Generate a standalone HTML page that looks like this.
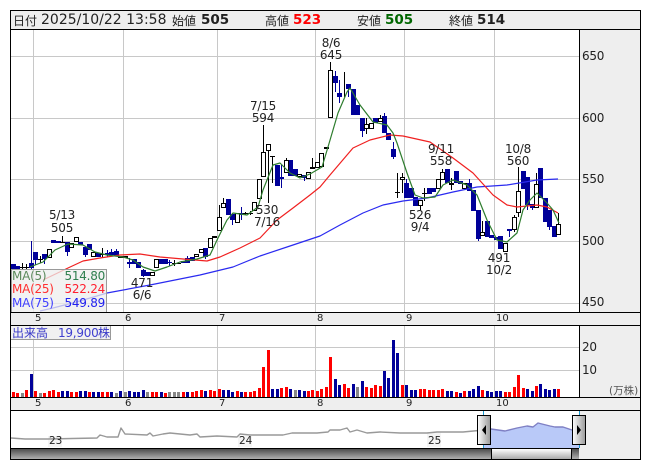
<!DOCTYPE html>
<html><head><meta charset="utf-8"><style>
html,body{margin:0;padding:0;background:#fff;width:653px;height:470px;overflow:hidden}
svg{display:block;font-family:"DejaVu Sans","Noto Sans CJK JP",sans-serif}
.c{shape-rendering:crispEdges}
text{fill:#222}
.l{font-size:12px;letter-spacing:-.25px;text-anchor:middle}
.a{font-size:12px;letter-spacing:-.25px}
.m{font-size:10px;fill:#333}
.h{font-size:14px}
.j{font-size:12px;font-family:"Liberation Sans","Noto Sans CJK JP",sans-serif}
.b{font-size:13.5px;font-weight:bold}
</style></head><body>
<svg width="653" height="470" viewBox="0 0 653 470" xmlns="http://www.w3.org/2000/svg">
<defs>
<linearGradient id="t" x1="0" y1="0" x2="0" y2="1"><stop offset="0" stop-color="#444"/><stop offset="1" stop-color="#b0b0b0"/></linearGradient>
<linearGradient id="th" x1="0" y1="0" x2="0" y2="1"><stop offset="0" stop-color="#fff"/><stop offset="1" stop-color="#aaa"/></linearGradient>
<linearGradient id="hl" x1="0" y1="0" x2="1" y2="0"><stop offset="0" stop-color="#fff"/><stop offset="1" stop-color="#999"/></linearGradient>
<linearGradient id="hr" x1="0" y1="0" x2="1" y2="0"><stop offset="0" stop-color="#fff"/><stop offset="1" stop-color="#999"/></linearGradient>
</defs>
<g class="c">
<rect x="10" y="10" width="631" height="450" fill="#eee"/>
<rect x="11" y="30" width="568" height="282" fill="#fff"/>
<rect x="11" y="326" width="568" height="71" fill="#fff"/>
<rect x="11" y="411" width="568" height="37" fill="#fff"/>
<path stroke="#c8c8c8" fill="none" d="M33.5 30V312M123.5 30V312M217.5 30V312M315.5 30V312M404.5 30V312M494.5 30V312M33.5 326V397M123.5 326V397M217.5 326V397M315.5 326V397M404.5 326V397M494.5 326V397M11 56.5H579M11 118.5H579M11 179.5H579M11 241.5H579M11 303.5H579M11 347.5H579M11 370.5H579"/>
</g>

<!-- wicks -->
<g class="c" fill="none">
<path stroke="#000099" d="M31.5 241V270M35.5 252V265M44.5 254V264M67.5 242V256M85.5 247V257M107.5 250V257M111.5 249V255M116.5 249V256M129.5 258V268M143.5 269V277M169.5 260V266M187.5 256V263M205.5 248V259M232.5 214V225M241.5 207V220M281.5 165V188M304.5 175V181M335.5 71V92M339.5 80V103M348.5 84V97M362.5 118V137M384.5 113V133M393.5 142V159M406.5 179V198M469.5 179V191M478.5 210V241M509.5 229V237M527.5 177V210M532.5 204V210M549.5 210V230"/>
<path stroke="#000" d="M22.5 263V270M26.5 264V270M40.5 256V263M62.5 236V243M102.5 248V258M174.5 260V266M245.5 212V215M250.5 211V215M219.5 205V217M223.5 198V203M263.5 125V152M268.5 144V203M272.5 156V183M286.5 158V160M312.5 158V167M330.5 62V70M344.5 72V97M366.5 118V134M380.5 115V118M397.5 173V198M402.5 173V193M420.5 206V210M424.5 188V201M442.5 169V172M451.5 178V190M482.5 221V232M514.5 215V232M518.5 167V217M536.5 173V184M558.5 213V224"/>
</g>
<!-- navy bodies -->
<path class="c" fill="#000099" d="M11 264h5v6h-5zM15 266h5v4h-5zM29 263h5v5h-5zM33 252h5v8h-5zM42 254h5v5h-5zM51 240h5v3h-5zM56 241h5v2h-5zM65 242h5v10h-5zM78 242h5v3h-5zM83 247h5v8h-5zM87 244h5v6h-5zM96 253h5v4h-5zM105 253h5v2h-5zM109 252h5v3h-5zM114 251h5v5h-5zM127 262h5v2h-5zM132 259h5v5h-5zM136 262h5v6h-5zM141 270h5v6h-5zM145 272h5v4h-5zM159 259h5v5h-5zM163 259h5v5h-5zM167 262h5v1h-5zM181 261h5v2h-5zM185 258h5v5h-5zM190 257h5v4h-5zM203 248h5v9h-5zM226 199h5v16h-5zM230 214h5v6h-5zM239 213h5v2h-5zM275 165h5v21h-5zM279 177h5v2h-5zM288 160h5v16h-5zM293 169h5v7h-5zM302 175h5v3h-5zM333 76h5v7h-5zM337 93h5v4h-5zM346 84h5v5h-5zM351 89h5v26h-5zM355 105h5v10h-5zM360 118h5v13h-5zM373 118h5v5h-5zM382 116h5v17h-5zM386 133h5v7h-5zM391 149h5v8h-5zM404 183h5v15h-5zM409 188h5v10h-5zM413 197h5v9h-5zM427 188h5v6h-5zM431 188h5v4h-5zM445 169h5v14h-5zM454 171h5v12h-5zM458 181h5v3h-5zM467 183h5v8h-5zM471 190h5v21h-5zM476 210h5v29h-5zM485 221h5v16h-5zM489 235h5v3h-5zM494 237h5v3h-5zM498 236h5v13h-5zM507 229h5v2h-5zM521 171h5v18h-5zM525 177h5v28h-5zM530 204h5v4h-5zM538 168h5v30h-5zM543 198h5v24h-5zM547 210h5v17h-5zM552 226h5v11h-5z"/>
<!-- doji -->
<path class="c" stroke="#000" fill="none" d="M20 267.5h5M24 267.5h5M38 259.5h5M60 242.5h5M100 254.5h5M172 263.5h5M176 263.5h5M243 213.5h5M248 213.5h5M270 156.5h5M395 192.5h5M422 193.5h5"/>
<!-- white bodies -->
<path class="c" fill="#fff" stroke="#000" d="M47.5 249.5h4v8h-4zM69.5 243.5h4v4h-4zM74.5 237.5h4v4h-4zM91.5 252.5h4v4h-4zM118.5 256.5h4v1h-4zM123.5 256.5h4v1h-4zM150.5 272.5h4v3h-4zM154.5 259.5h4v8h-4zM194.5 254.5h4v2h-4zM199.5 249.5h4v3h-4zM208.5 238.5h4v9h-4zM212.5 236.5h4v1h-4zM217.5 217.5h4v13h-4zM221.5 203.5h4v4h-4zM235.5 213.5h4v9h-4zM252.5 202.5h4v8h-4zM257.5 179.5h4v19h-4zM261.5 152.5h4v24h-4zM266.5 144.5h4v6h-4zM284.5 160.5h4v12h-4zM297.5 174.5h4v2h-4zM306.5 172.5h4v6h-4zM310.5 167.5h4v1h-4zM315.5 162.5h4v5h-4zM319.5 153.5h4v13h-4zM324.5 147.5h4v1h-4zM328.5 70.5h4v47h-4zM364.5 124.5h4v4h-4zM369.5 123.5h4v5h-4zM378.5 118.5h4v3h-4zM400.5 177.5h4v2h-4zM418.5 200.5h4v5h-4zM436.5 179.5h4v9h-4zM440.5 172.5h4v7h-4zM449.5 183.5h4v1h-4zM462.5 183.5h4v5h-4zM480.5 232.5h4v3h-4zM503.5 243.5h4v8h-4zM512.5 217.5h4v12h-4zM516.5 191.5h4v21h-4zM534.5 184.5h4v23h-4zM556.5 224.5h4v10h-4z"/>

<!-- MAs -->
<polyline fill="none" stroke="#2a2af0" stroke-width="1.2" stroke-linejoin="round" points="40,311 53,308 80,301 107,293 150,285 200,275 233,267 260,256 293,245 320,236 340,225 363,213 383,205 403,201 427,198 453,192 477,187 507,185 537,180 558,179"/>
<polyline fill="none" stroke="#f02020" stroke-width="1.2" stroke-linejoin="round" points="43,280 68,268 83,261 100,258 120,255 140,254 160,257 183,259 207,261 220,257 240,248 260,238 277,220 293,208 310,195 320,187 330,175 353,148 370,140 390,135 403,136 430,142 453,158 473,173 493,195 507,205 517,207 537,205 547,207 558,213"/>
<polyline fill="none" stroke="#2e7d2e" stroke-width="1.2" stroke-linejoin="round" points="30,267 43,262 55,250 68,244 83,245 95,252 107,255 123,257 133,260 143,267 155,271 167,267 180,262 197,259 210,255 218,238 227,220 233,213 247,215 258,207 263,190 273,165 280,163 290,173 300,178 310,174 322,167 328,147 338,113 347,92 350,88 360,105 373,122 387,125 393,133 397,143 407,173 415,195 423,198 435,197 443,185 453,180 467,185 477,195 487,220 497,240 507,242 517,233 523,210 530,200 537,193 547,203 553,210 559,223"/>

<!-- chart labels -->
<g class="l">
<text x="263" y="110">7/15</text><text x="263" y="122">594</text>
<text x="331" y="47">8/6</text><text x="331" y="59">645</text>
<text x="62" y="219">5/13</text><text x="62" y="232">505</text>
<text x="142" y="287">471</text><text x="142" y="299">6/6</text>
<text x="267" y="214">530</text><text x="267" y="226">7/16</text>
<text x="441" y="153">9/11</text><text x="441" y="165">558</text>
<text x="518" y="153">10/8</text><text x="518" y="165">560</text>
<text x="420" y="219">526</text><text x="420" y="231">9/4</text>
<text x="499" y="262">491</text><text x="499" y="274">10/2</text>
</g>

<!-- legend -->
<rect class="c" x="11.5" y="269.5" width="95" height="43" fill="#eee" fill-opacity=".75" stroke="#999"/>
<g class="a">
<text x="12" y="280" style="fill:#5c8a5c">MA(5)</text><text x="105" y="280" text-anchor="end" style="fill:#2f7f4f">514.80</text>
<text x="12" y="293" style="fill:#ff3030">MA(25)</text><text x="105" y="293" text-anchor="end" style="fill:#ff2030">522.24</text>
<text x="12" y="307" style="fill:#4040ff">MA(75)</text><text x="105" y="307" text-anchor="end" style="fill:#2020f0">549.89</text>
</g>

<!-- volume -->
<path class="c" fill="none" stroke="#f00" stroke-width="3" d="M13.5 397v-5M17.5 397v-4M26.5 397v-7M35.5 397v-6M44.5 397v-4M49.5 397v-6M53.5 397v-7M58.5 397v-5M71.5 397v-5M76.5 397v-5M89.5 397v-5M102.5 397v-5M107.5 397v-5M152.5 397v-5M156.5 397v-5M165.5 397v-4M183.5 397v-5M192.5 397v-5M196.5 397v-6M201.5 397v-7M210.5 397v-7M214.5 397v-6M219.5 397v-8M237.5 397v-6M245.5 397v-5M250.5 397v-5M254.5 397v-6M259.5 397v-9M263.5 397v-30M268.5 397v-47M281.5 397v-9M286.5 397v-10M308.5 397v-6M312.5 397v-7M317.5 397v-6M321.5 397v-8M326.5 397v-10M330.5 397v-40M344.5 397v-13M348.5 397v-9M366.5 397v-10M371.5 397v-9M375.5 397v-12M380.5 397v-11M402.5 397v-12M420.5 397v-8M424.5 397v-8M429.5 397v-7M433.5 397v-7M438.5 397v-7M442.5 397v-8M456.5 397v-5M464.5 397v-6M482.5 397v-7M505.5 397v-5M509.5 397v-5M514.5 397v-10M518.5 397v-22M523.5 397v-9M536.5 397v-11M558.5 397v-8"/>
<path class="c" fill="none" stroke="#000099" stroke-width="3" d="M31.5 397v-23M62.5 397v-6M67.5 397v-6M80.5 397v-6M85.5 397v-6M93.5 397v-5M98.5 397v-5M111.5 397v-5M120.5 397v-6M129.5 397v-6M134.5 397v-5M138.5 397v-5M143.5 397v-7M161.5 397v-5M187.5 397v-5M205.5 397v-6M223.5 397v-7M228.5 397v-7M232.5 397v-5M241.5 397v-5M272.5 397v-8M277.5 397v-8M290.5 397v-8M299.5 397v-7M304.5 397v-6M335.5 397v-18M339.5 397v-12M353.5 397v-13M362.5 397v-16M384.5 397v-26M388.5 397v-19M393.5 397v-57M397.5 397v-44M406.5 397v-12M411.5 397v-7M415.5 397v-7M447.5 397v-6M451.5 397v-6M460.5 397v-4M469.5 397v-6M473.5 397v-8M478.5 397v-11M487.5 397v-6M491.5 397v-5M496.5 397v-6M500.5 397v-6M527.5 397v-8M532.5 397v-6M540.5 397v-13M545.5 397v-8M549.5 397v-7M554.5 397v-8"/>
<path class="c" fill="none" stroke="#888" stroke-width="3" d="M22.5 397v-4M40.5 397v-4M116.5 397v-4M125.5 397v-5M147.5 397v-5M169.5 397v-5M174.5 397v-5M178.5 397v-5M295.5 397v-7M357.5 397v-10"/>
<rect class="c" x="10.5" y="325.5" width="100" height="14" fill="#eee" fill-opacity=".8" stroke="#999"/>
<text class="j" x="12" y="337" style="fill:#3838c8">出来高</text>
<text class="a" x="58" y="337" style="fill:#4040d0;font-size:12px">19,900</text>
<text class="j" x="98" y="337" style="fill:#3838c8">株</text>

<!-- navigator -->
<path d="M484 430L491 429 505 431 517 428 527 426 533 427 538 423 550 426 555 427 563 427 572 430 579 428V448H484Z" fill="#b9c9f8"/>
<polyline fill="none" stroke="#7f80c4" stroke-width="1.4" stroke-linejoin="round" points="484,430 491,429 505,431 517,428 527,426 533,427 538,423 550,426 555,427 563,427 572,430 579,428"/>
<rect x="48" y="436" width="14" height="11" fill="#f4f4f4"/>
<rect x="238" y="436" width="14" height="11" fill="#f4f4f4"/>
<rect x="427" y="432" width="14" height="15" fill="#f4f4f4"/>
<polyline fill="none" stroke="#999" stroke-width="1.4" stroke-linejoin="round" points="11,438 25,439 48,439 97,438 100,435 107,437 118,437 121,428 125,434 147,435 150,433 153,436 163,434 170,433 190,435 197,434 200,437 217,436 237,437 240,434 250,435 283,435 292,433 317,433 328,432 330,430 340,430 347,428 350,432 357,430 367,433 380,432 400,433 427,433 437,432 463,432 484,430"/>
<g style="font-size:10.5px">
<text x="49" y="444">23</text><text x="239" y="444">24</text><text x="428" y="444">25</text>
</g>
<path class="c" stroke="#1a9ad0" fill="none" d="M483.5 410V448M579.5 410V448"/>
<rect class="c" x="477.5" y="415.5" width="13" height="29" fill="url(#hl)" stroke="#000"/>
<rect class="c" x="572.5" y="415.5" width="13" height="29" fill="url(#hr)" stroke="#000"/>
<path d="M482 430l4-5v10z" fill="#000"/><path d="M581 430l-4-5v10z" fill="#000"/>

<!-- scrollbar -->
<rect class="c" x="11" y="448" width="568" height="11" fill="url(#t)"/>
<rect class="c" x="491" y="449" width="81" height="10" fill="url(#th)"/>
<path class="c" stroke="#000" fill="none" d="M491.5 448V459M571.5 448V459"/>

<!-- frame -->
<path class="c" stroke="#000" fill="none" d="M10.5 10.5H640.5V459.5H10.5ZM10 29.5H641M10 312.5H641M10 325.5H641M10 397.5H641M10 410.5H641M10 448.5H579M579.5 29V312M579.5 325V397"/>

<!-- header -->
<text class="j" x="13" y="25">日付</text>
<text class="h" x="41" y="24">2025/10/22 13:58</text>
<text class="j" x="172" y="25">始値</text><text class="b" x="201" y="24">505</text>
<text class="j" x="265" y="25">高値</text><text class="b" x="293" y="24" style="fill:#f00">523</text>
<text class="j" x="357" y="25">安値</text><text class="b" x="385" y="24" style="fill:#006600">505</text>
<text class="j" x="449" y="25">終値</text><text class="b" x="477" y="24">514</text>

<!-- price axis -->
<g class="a">
<text x="582" y="60">650</text><text x="582" y="122">600</text><text x="582" y="183">550</text><text x="582" y="245">500</text><text x="582" y="306">450</text>
<text x="582" y="351">20</text><text x="582" y="374">10</text>
</g>
<text x="609" y="394" style="font-size:10.5px;fill:#555">(万株)</text>

<!-- month labels -->
<g class="m">
<text x="35" y="321">5</text><text x="125" y="321">6</text><text x="219" y="321">7</text><text x="317" y="321">8</text><text x="406" y="321">9</text><text x="496" y="321">10</text>
<text x="35" y="406">5</text><text x="125" y="406">6</text><text x="219" y="406">7</text><text x="317" y="406">8</text><text x="406" y="406">9</text><text x="496" y="406">10</text>
</g>
</svg>
</body></html>
